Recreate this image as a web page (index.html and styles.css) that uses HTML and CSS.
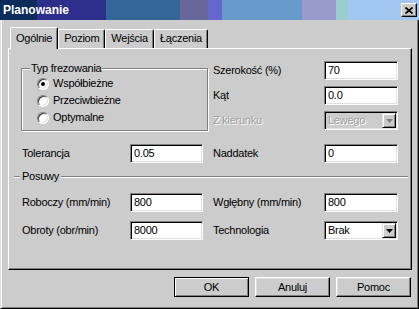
FILE: index.html
```html
<!DOCTYPE html>
<html lang="pl">
<head>
<meta charset="utf-8">
<title>Planowanie</title>
<link rel="stylesheet" href="styles.css">
</head>
<body>
<div class="win">
  <div class="titlebar">
    <span class="title">Planowanie</span>
    <span class="close"><svg width="8" height="7" viewBox="0 0 8 7"><path d="M0.5 0.5 L7.5 6.5 M7.5 0.5 L0.5 6.5" stroke="#000" stroke-width="1.7" fill="none"/></svg></span>
  </div>
  <div class="client">
    <div class="tabs">
      <div class="tab active">Ogólnie</div>
      <div class="tab">Poziom</div>
      <div class="tab">Wejścia</div>
      <div class="tab">Łączenia</div>
    </div>
    <div class="panel">
      <div class="top">
        <div class="group">
          <span class="legend">Typ frezowania</span>
          <div class="opt"><span class="radio on"></span>Współbieżne</div>
          <div class="opt"><span class="radio"></span>Przeciwbieżne</div>
          <div class="opt"><span class="radio"></span>Optymalne</div>
        </div>
        <div class="fields">
          <span class="lbl">Szerokość (%)</span><span class="field">70</span>
          <span class="lbl">Kąt</span><span class="field">0.0</span>
          <span class="lbl dis">Z kierunku</span>
          <span class="select dis"><span class="val">Lewego</span><span class="drop"><svg width="7" height="4" viewBox="0 0 7 4"><polygon points="0,0 7,0 3.5,4" fill="#808080"/></svg></span></span>
        </div>
      </div>
      <div class="row tol">
        <span class="lbl">Tolerancja</span><span class="field">0.05</span>
        <span class="lbl c3">Naddatek</span><span class="field">0</span>
      </div>
      <div class="sep"><span class="stub"></span><span class="sep-text">Posuwy</span><span class="line"></span></div>
      <div class="row rob">
        <span class="lbl">Roboczy (mm/min)</span><span class="field">800</span>
        <span class="lbl c3">Wgłębny (mm/min)</span><span class="field">800</span>
      </div>
      <div class="row obr">
        <span class="lbl">Obroty (obr/min)</span><span class="field">8000</span>
        <span class="lbl c3">Technologia</span>
        <span class="select"><span class="val">Brak</span><span class="drop"><svg width="7" height="4" viewBox="0 0 7 4"><polygon points="0,0 7,0 3.5,4" fill="#000"/></svg></span></span>
      </div>
    </div>
    <div class="buttons">
      <span class="btn def">OK</span>
      <span class="btn">Anuluj</span>
      <span class="btn">Pomoc</span>
    </div>
  </div>
</div>
</body>
</html>
```
FILE: styles.css
```css
body {
  margin: 0;
  font: 11px/13px "Liberation Sans", Arial, sans-serif;
  letter-spacing: -0.25px;
  color: #000;
}
.win {
  width: 419px;
  height: 309px;
  background: #cccccc;
  display: flex;
  flex-direction: column;
}
.titlebar {
  height: 20px;
  flex: none;
  display: flex;
  align-items: center;
  padding-left: 3px;
  background: linear-gradient(to right,
    #0c2c5c 0 37px, #2e2e8c 37px 106px, #336699 106px 180px,
    #666699 180px 208px, #6666cc 208px 222px, #6699cc 222px 302px,
    #9999cc 302px 336px, #99cccc 336px 348px, #a2c8f2 348px);
}
.title {
  color: #fff;
  font-weight: bold;
  font-size: 12px;
  letter-spacing: 0;
}
.close {
  margin-left: auto;
  margin-right: 2px;
  width: 16px;
  height: 14px;
  box-sizing: border-box;
  background: #ccc;
  border: 1px solid;
  border-color: #fff #000 #000 #fff;
  box-shadow: inset -1px -1px 0 #808080;
  display: flex;
  align-items: center;
  justify-content: center;
}
.close svg { display: block; }
.client {
  flex: 1;
  border: 1px solid;
  border-top: 0;
  border-color: #000 #000 #000 #dfdfdf;
  box-shadow: inset 1px 0 0 #fff, inset -1px -1px 0 #808080;
  padding: 7px 6px 0 7px;
}
.tabs {
  display: flex;
  align-items: flex-end;
  height: 21px;
  margin-left: 2px;
}
.tab {
  height: 19px;
  box-sizing: border-box;
  padding: 2px 5px 0;
  border: 1px solid;
  border-bottom: 0;
  border-color: #fff #000 transparent #fff;
  border-radius: 2px 2px 0 0;
  box-shadow: inset -1px 0 0 #808080;
}
.tab.active {
  height: 22px;
  margin-bottom: -1px;
  padding-top: 4px;
  position: relative;
  z-index: 1;
  background: #ccc;
}
.panel {
  height: 222px;
  box-sizing: border-box;
  border: 1px solid;
  border-color: #fff #000 #000 #fff;
  box-shadow: inset -1px -1px 0 #808080;
  display: flex;
  flex-direction: column;
  padding-top: 12px;
}
.top {
  display: flex;
  align-items: flex-start;
}
.group {
  margin: 7px 0 0 12px;
  width: 187px;
  height: 63px;
  box-sizing: border-box;
  border: 1px solid #808080;
  box-shadow: 1px 1px 0 #fff, inset 1px 1px 0 #fff;
  display: flex;
  flex-direction: column;
  align-items: flex-start;
}
.legend {
  margin: -7px 0 0 8px;
  padding: 0 1px;
  background: #ccc;
}
.opt {
  display: flex;
  align-items: center;
  gap: 4px;
  height: 17px;
  padding-left: 15px;
}
.radio {
  width: 12px;
  height: 12px;
  box-sizing: border-box;
  border-radius: 50%;
  border: 1px solid;
  border-color: #808080 #fff #fff #808080;
  box-shadow: inset 1px 1px 0 #404040, inset -1px -1px 0 #dfdfdf;
  background: #fff;
  display: flex;
  align-items: center;
  justify-content: center;
}
.radio.on::after {
  content: "";
  width: 4px;
  height: 4px;
  border-radius: 50%;
  background: #000;
}
.fields {
  margin-left: 5px;
  display: grid;
  grid-template-columns: 111px 74px;
  grid-auto-rows: 19px;
  row-gap: 6px;
  align-items: center;
}
.lbl.dis {
  color: #a0a0a0;
  text-shadow: 1px 1px 0 #fff;
}
.field {
  height: 19px;
  box-sizing: border-box;
  background: #fff;
  border: 1px solid;
  border-color: #808080 #fff #fff #808080;
  box-shadow: inset 1px 1px 0 #000, inset -1px -1px 0 #dfdfdf;
  padding: 2px 0 0 3px;
}
.select {
  height: 19px;
  box-sizing: border-box;
  background: #fff;
  border: 1px solid;
  border-color: #808080 #fff #fff #808080;
  box-shadow: inset 1px 1px 0 #000, inset -1px -1px 0 #dfdfdf;
  padding: 1px;
  display: flex;
}
.select .val {
  flex: 1;
  padding: 1px 0 0 2px;
}
.select.dis { background: #ccc; }
.select.dis .val {
  color: #a0a0a0;
  text-shadow: 1px 1px 0 #fff;
}
.drop {
  width: 14px;
  box-sizing: border-box;
  background: #ccc;
  border: 1px solid;
  border-color: #dfdfdf #000 #000 #dfdfdf;
  box-shadow: inset 1px 1px 0 #fff, inset -1px -1px 0 #808080;
  display: flex;
  align-items: center;
  justify-content: center;
}
.drop svg { display: block; }
.row {
  display: grid;
  grid-template-columns: 108px 73px 121px 74px;
  grid-template-rows: 19px;
  align-items: center;
  margin-left: 13px;
}
.row .c3 { padding-left: 10px; }
.row.tol { margin-top: 13px; }
.row.rob { margin-top: 9px; }
.row.obr { margin-top: 9px; }
.sep {
  display: flex;
  align-items: flex-start;
  height: 14px;
  margin: 7px 3px 0 5px;
}
.stub, .line {
  height: 2px;
  box-sizing: border-box;
  border-top: 1px solid #808080;
  border-bottom: 1px solid #fff;
  margin-top: 6px;
}
.stub { width: 6px; }
.line { flex: 1; }
.sep-text { padding: 0 2px; }
.buttons {
  display: flex;
  justify-content: flex-end;
  gap: 6px;
  margin: 7px 1px 0 0;
}
.btn {
  width: 75px;
  height: 20px;
  box-sizing: border-box;
  border: 1px solid;
  border-color: #fff #000 #000 #fff;
  box-shadow: inset -1px -1px 0 #808080, inset 1px 1px 0 #dfdfdf;
  display: flex;
  align-items: center;
  justify-content: center;
}
.btn.def {
  border-color: #000;
  box-shadow: inset 1px 1px 0 #fff, inset -1px -1px 0 #808080;
}
```
